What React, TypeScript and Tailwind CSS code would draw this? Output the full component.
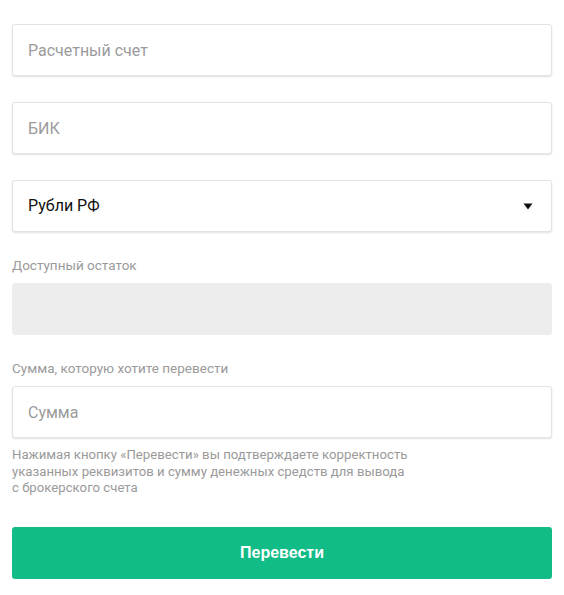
const field =
  "h-[52px] w-full rounded-[3px] border border-[#e3e3e3] bg-white px-[15px] text-[16px] text-[#222] shadow-[0_1px_2px_rgba(0,0,0,0.12)] outline-none placeholder:text-[#9b9b9b]";

const font = { fontFamily: "Roboto, 'Liberation Sans', sans-serif" };
const arial = { fontFamily: "'Liberation Sans', Arial, sans-serif" };

export default function App() {
  return (
    <div className="min-h-[595px] bg-white px-3 pt-6" style={font}>
      <form className="flex w-[540px] flex-col" onSubmit={(e) => e.preventDefault()}>
        <input className={field} placeholder="Расчетный счет" />
        <input className={`${field} mt-[26px]`} placeholder="БИК" />

        <div className={`${field} mt-[26px] flex items-center justify-between`}>
          <span className="text-[#111]">Рубли РФ</span>
          <svg width="10" height="7" viewBox="0 0 10 7" className="mr-[3px]">
            <path d="M0.5 0.5h9L5 6.5z" fill="#111" />
          </svg>
        </div>

        <label className="mt-[25px] text-[13.5px] leading-[17px] text-[#9a9a9a]">Доступный остаток</label>
        <div className="mt-[9px] h-[52px] rounded-[3px] bg-[#ededed]" />

        <label className="mt-[25px] text-[13.5px] leading-[17px] text-[#9a9a9a]">
          Сумма, которую хотите перевести
        </label>
        <input className={`${field} mt-[9px]`} placeholder="Сумма" />

        <p className="mt-[9px] text-[13.2px] leading-[16.5px] text-[#9a9a9a]">
          Нажимая кнопку «Перевести» вы подтверждаете корректность
          <br />
          указанных реквизитов и сумму денежных средств для вывода
          <br />с брокерского счета
        </p>

        <button
          type="submit"
          className="mt-[30px] h-[52px] rounded-[3px] bg-[#12bc87] text-[16px] font-bold text-white"
          style={arial}
        >
          Перевести
        </button>
      </form>
    </div>
  );
}
